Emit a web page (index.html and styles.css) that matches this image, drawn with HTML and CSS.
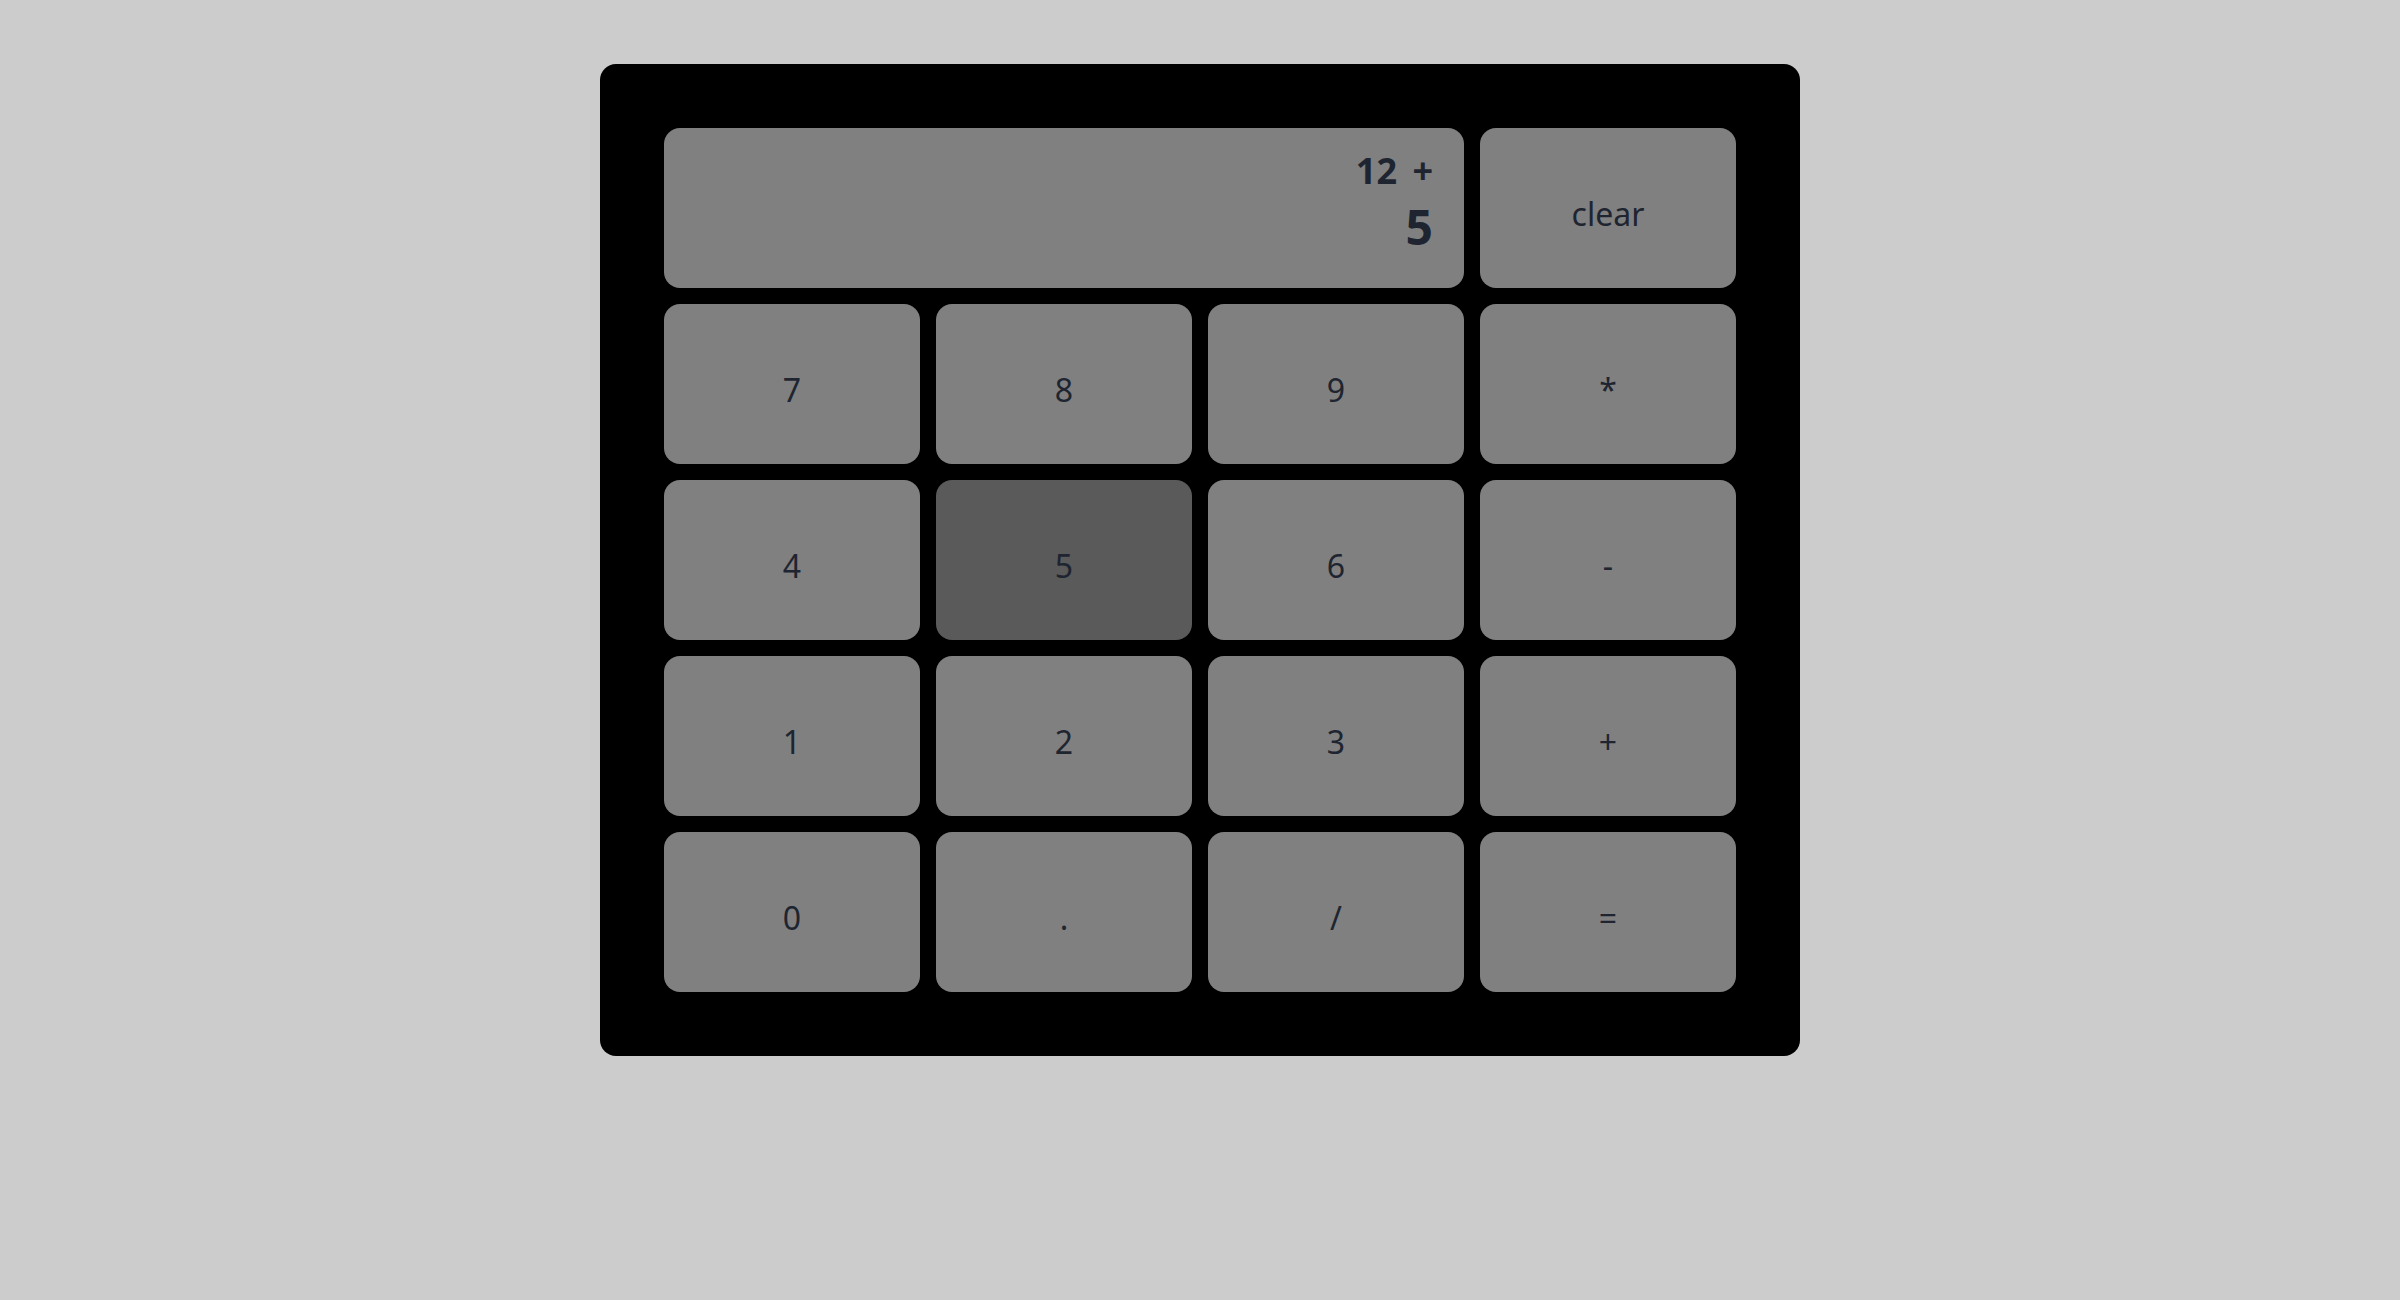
FILE: index.html
```html
<!DOCTYPE html>
<html>
    <head>
        <title>Calculator</title>
        <link rel="stylesheet" href="styles.css">
    </head>
    <body>
        <div class="calculator">
            <div class="output">
                <div class="previous-operand">12 +</div>
                <div class="current-operand">5</div>
            </div>
            <button>clear</button>
            <button>7</button>
            <button>8</button>
            <button>9</button>
            <button>*</button>
            <button>4</button>
            <button class="active">5</button>
            <button>6</button>
            <button>-</button>
            <button>1</button>
            <button>2</button>
            <button>3</button>
            <button>+</button>
            <button>0</button>
            <button>.</button>
            <button>/</button>
            <button>=</button>
        </div>
    </body>
</html>
```

FILE: styles.css
```css
body{
    margin: 0;
    font-family: "Noto Sans", "Open Sans", sans-serif;
    background-color: #cccccc;
    color: #1e2530;
}
.calculator{
    width: fit-content;
    margin: 64px auto;
    padding: 64px;
    background-color: #000;
    border-radius: 16px;
    display: grid;
    grid-template-columns: repeat(4, 256px);
    grid-auto-rows: 160px;
    gap: 16px;
}
.output{
    grid-column: span 3;
    background-color: #808080;
    border-radius: 16px;
    padding: 19px 31px 0 32px;
    text-align: right;
    font-weight: bold;
}
.previous-operand{
    font-size: 36px;
    line-height: 48px;
    word-spacing: 6px;
}
.current-operand{
    font-size: 48px;
    line-height: 64px;
}
button{
    font-family: inherit;
    font-size: 32px;
    color: #1e2530;
    background-color: #808080;
    border: none;
    border-radius: 16px;
    padding: 11px 0 0 0;
    cursor: pointer;
}
button:hover,
button.active{
    background-color: #5a5a5a;
}
```
